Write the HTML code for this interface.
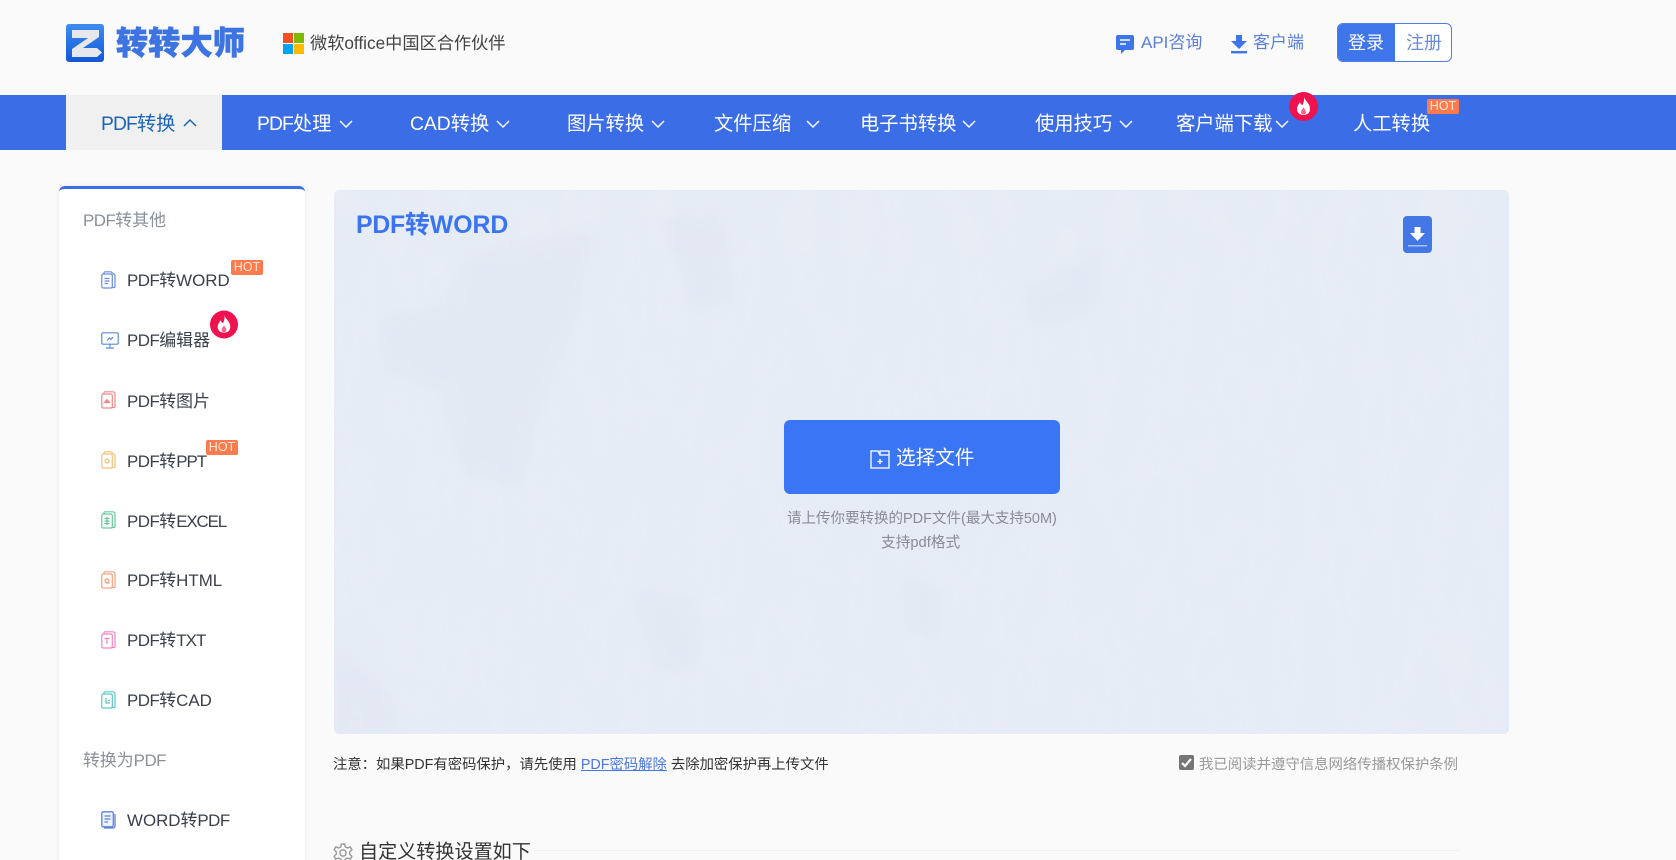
<!DOCTYPE html>
<html lang="zh-CN">
<head>
<meta charset="utf-8">
<title>PDF转WORD</title>
<style>
html,body{margin:0;padding:0;width:1676px;height:860px;overflow:hidden;background:#fafafa}
body{position:relative;font-family:"Liberation Sans","Noto Sans CJK SC",sans-serif;color:#333}
.a{position:absolute}
.t{position:absolute;white-space:nowrap;line-height:30px;height:30px}
.n{color:#fff;font-size:19.3px}
.s{font-size:16.9px;color:#3a3f4a;left:127px}
.g{font-size:16.9px;color:#8b909a;left:83px}
.p{letter-spacing:-.5px}
.q{letter-spacing:-.9px}
.hot{position:absolute;background:#ff7a4d;color:#ffe9dc;font-size:12.5px;line-height:15px;height:15px;width:32px;text-align:center;border-radius:2px}
svg{position:absolute;display:block}
</style>
</head>
<body>
<!-- logo -->
<svg style="left:66px;top:24px" width="38" height="38" viewBox="0 0 38 38">
<defs><linearGradient id="lg" x1="0" y1="0" x2="0" y2="1"><stop offset="0" stop-color="#3f8df0"/><stop offset="1" stop-color="#1257d8"/></linearGradient></defs>
<rect width="38" height="38" rx="3" fill="url(#lg)"/>
<path d="M6 6H33V13L17 24H31L36 28.500 31 33H6V25L22 14H6Z" fill="#e6e8eb"/>
</svg>
<div class="t" style="left:116px;top:28px;font-size:32px;line-height:30px;font-weight:900;color:#3d74e2;-webkit-text-stroke:.6px #3d74e2;letter-spacing:.3px">转转大师</div>
<svg style="left:283px;top:33px" width="21" height="21" viewBox="0 0 21 21">
<rect width="10" height="10" fill="#f25022"/><rect x="11" width="10" height="10" fill="#7fba00"/>
<rect y="11" width="10" height="10" fill="#00a4ef"/><rect x="11" y="11" width="10" height="10" fill="#ffb900"/>
</svg>
<div class="t" style="left:310px;top:28px;font-size:17.2px;color:#444">微软office中国区合作伙伴</div>

<!-- top right -->
<svg style="left:1116px;top:35px" width="18" height="19" viewBox="0 0 18 19">
<path d="M2 0H16A2 2 0 0 1 18 2V13A2 2 0 0 1 16 15H9L5 19V15H2A2 2 0 0 1 0 13V2A2 2 0 0 1 2 0Z" fill="#3f75ea"/>
<path d="M4 5H14M4 9H10" stroke="#fff" stroke-width="1.6" fill="none"/>
</svg>
<div class="t" style="left:1141px;top:28px;font-size:17px;color:#5a7fd8">API咨询</div>
<svg style="left:1230px;top:35px" width="18" height="19" viewBox="0 0 18 19">
<path d="M6 0H12V6H17L9 14 1 6H6Z" fill="#3f75ea"/><rect x="1" y="16" width="16" height="2.4" fill="#3f75ea"/>
</svg>
<div class="t" style="left:1253px;top:28px;font-size:17px;color:#5a7fd8">客户端</div>
<div class="a" style="left:1337px;top:23px;width:113px;height:37px;border:1px solid #4f7de0;border-radius:6px;background:#fff;overflow:hidden">
<div style="width:57px;height:37px;background:#3f75ea"></div>
</div>
<div class="t" style="left:1348px;top:28px;font-size:18px;color:#fff">登录</div>
<div class="t" style="left:1406px;top:28px;font-size:18px;color:#6a8cd8">注册</div>

<!-- nav -->
<div class="a" style="left:0;top:95px;width:1676px;height:55px;background:#3b6de6"></div>
<div class="a" style="left:66px;top:95px;width:156px;height:55px;background:#f0f0f0"></div>
<div class="t" style="left:101px;top:110px;font-size:19.3px;color:#1c64b8"><span class="q">PDF</span>转换</div>
<div class="t n" style="left:257px;top:110px"><span class="q">PDF</span>处理</div>
<div class="t n" style="left:410px;top:110px">CAD转换</div>
<div class="t n" style="left:567px;top:110px">图片转换</div>
<div class="t n" style="left:714px;top:110px">文件压缩</div>
<div class="t n" style="left:860px;top:110px">电子书转换</div>
<div class="t n" style="left:1035px;top:110px">使用技巧</div>
<div class="t n" style="left:1176px;top:110px">客户端下载</div>
<div class="t n" style="left:1353px;top:110px">人工转换</div>
<svg style="left:0;top:95px" width="1676" height="55" viewBox="0 95 1676 55" fill="none" stroke="#fff" stroke-width="1.5">
<path d="M184 126L190 120 196 126" stroke="#1c64b8"/>
<path d="M340 121L346 127 352 121"/>
<path d="M497 121L503 127 509 121"/>
<path d="M652 121L658 127 664 121"/>
<path d="M807 121L813 127 819 121"/>
<path d="M963 121L969 127 975 121"/>
<path d="M1120 121L1126 127 1132 121"/>
<path d="M1276 121L1282 127 1288 121"/>
</svg>
<svg style="left:1289px;top:92px" width="29" height="29" viewBox="0 0 29 29">
<circle cx="14.5" cy="14.5" r="14.5" fill="#f0114f"/>
<path d="M15 5C16 9 21 11 21 17 21 21 18 23 14.5 23 11 23 8 21 8 17 8 14 10 12 11 10 11.500 12 12.500 13 13.500 13 14.500 11 15.500 8 15 5Z" fill="#fff"/>
<path d="M14.500 15C15 17 17 18 17 20 17 21.500 16 22.500 14.500 22.500 13 22.500 12 21.500 12 20 12 18 14 17 14.500 15Z" fill="#f7668f"/>
</svg>
<div class="hot" style="left:1427px;top:99px">HOT</div>

<!-- sidebar -->
<div class="a" style="left:59px;top:186px;width:246px;height:690px;background:#fff;border-top:3px solid #3b6de6;border-radius:6px 6px 0 0;box-shadow:0 0 6px rgba(0,0,0,.06);box-sizing:border-box"></div>
<div class="t g" style="top:206px"><span class="p">PDF</span>转其他</div>
<div class="t s" style="top:266px"><span class="p">PDF</span>转WORD</div>
<div class="t s" style="top:326px"><span class="p">PDF</span>编辑器</div>
<div class="t s" style="top:387px"><span class="p">PDF</span>转图片</div>
<div class="t s" style="top:447px"><span class="p">PDF</span>转<span style="letter-spacing:-1px">PPT</span></div>
<div class="t s" style="top:507px"><span class="p">PDF</span>转<span style="letter-spacing:-1.1px">EXCEL</span></div>
<div class="t s" style="top:566px"><span class="p">PDF</span>转HTML</div>
<div class="t s" style="top:626px"><span class="p">PDF</span>转<span class="q">TXT</span></div>
<div class="t s" style="top:686px"><span class="p">PDF</span>转CAD</div>
<div class="t g" style="top:746px">转换为<span class="p">PDF</span></div>
<div class="t s" style="top:806px">WORD转<span class="p">PDF</span></div>

<svg style="left:101px;top:271px" width="15" height="18" viewBox="0 0 15 18" fill="none" stroke="#6a8fd8" stroke-width="1.2"><path d="M3 3V1.500A1 1 0 0 1 4 .8H10L14 4V15.500A1 1 0 0 1 13 16.500H11"/><rect x=".8" y="3" width="10.500" height="14" rx="1.500"/><path d="M3.500 7.500H8.500M3.500 10H8.500M3.500 12.500H7"/></svg>
<svg style="left:101px;top:332px" width="18" height="17" viewBox="0 0 18 17" fill="none" stroke="#5b8ad6" stroke-width="1.2"><rect x=".8" y=".8" width="16.400" height="11.400" rx="1.200"/><path d="M9 12V15.500M5 16H13M6 8.500L8.500 6 10 7.500 12 5" /></svg>
<svg style="left:101px;top:391px" width="15" height="18" viewBox="0 0 15 18" fill="none" stroke="#ee8a8a" stroke-width="1.2"><path d="M3 3V1.500A1 1 0 0 1 4 .8H12A2 2 0 0 1 14 3V15.500A1 1 0 0 1 13 16.500H11"/><rect x=".8" y="3" width="10.500" height="14" rx="1.500"/><path d="M3.500 11.500L6 8.500 8.500 11.500Z" fill="#ee8a8a"/></svg>
<svg style="left:101px;top:451px" width="15" height="18" viewBox="0 0 15 18" fill="none" stroke="#f2c27c" stroke-width="1.2"><path d="M3 3V1.500A1 1 0 0 1 4 .8H10L14 4V15.500A1 1 0 0 1 13 16.500H11"/><rect x=".8" y="3" width="10.500" height="14" rx="1.500"/><circle cx="6" cy="10" r="2"/></svg>
<svg style="left:101px;top:511px" width="15" height="18" viewBox="0 0 15 18" fill="none" stroke="#6cc79b" stroke-width="1.2"><path d="M3 3V1.500A1 1 0 0 1 4 .8H12A2 2 0 0 1 14 3V15.500A1 1 0 0 1 13 16.500H11"/><rect x=".8" y="3" width="10.500" height="14" rx="1.500"/><path d="M3.500 7.500H8.500M3.500 10H8.500M3.500 12.500H8.500M6 6V14"/></svg>
<svg style="left:101px;top:571px" width="15" height="18" viewBox="0 0 15 18" fill="none" stroke="#f0a37e" stroke-width="1.2"><path d="M3 3V1.500A1 1 0 0 1 4 .8H12A2 2 0 0 1 14 3V15.500A1 1 0 0 1 13 16.500H11"/><rect x=".8" y="3" width="10.500" height="14" rx="1.500"/><path d="M4 9L6 7.500M5.500 11L8.500 12.500"/><circle cx="6" cy="10" r="2"/></svg>
<svg style="left:101px;top:631px" width="15" height="18" viewBox="0 0 15 18" fill="none" stroke="#f285c0" stroke-width="1.2"><path d="M3 3V1.500A1 1 0 0 1 4 .8H12A2 2 0 0 1 14 3V15.500A1 1 0 0 1 13 16.500H11"/><rect x=".8" y="3" width="10.500" height="14" rx="1.500"/><path d="M3.500 7.500H8.500M6 7.500V13"/></svg>
<svg style="left:101px;top:691px" width="15" height="18" viewBox="0 0 15 18" fill="none" stroke="#5cc9c0" stroke-width="1.2"><path d="M3 3V1.500A1 1 0 0 1 4 .8H12A2 2 0 0 1 14 3V15.500A1 1 0 0 1 13 16.500H11"/><rect x=".8" y="3" width="10.500" height="14" rx="1.500"/><path d="M5 7V12H9M7 9.500H9"/></svg>
<svg style="left:101px;top:811px" width="15" height="18" viewBox="0 0 15 18" fill="none" stroke="#5e82d8" stroke-width="1.3"><path d="M3 17H12A2 2 0 0 0 14 15V3"/><rect x=".8" y=".8" width="11.500" height="15" rx="1.500" fill="#eef2fc"/><path d="M3.500 5H9.500M3.500 8H9.500M3.500 11H7"/></svg>

<div class="hot" style="left:231px;top:260px">HOT</div>
<div class="hot" style="left:206px;top:440px">HOT</div>
<svg style="left:210px;top:310px" width="28" height="29" viewBox="0 0 29 29">
<circle cx="14.5" cy="14.5" r="14.500" fill="#f0114f"/>
<path d="M15 5C16 9 21 11 21 17 21 21 18 23 14.5 23 11 23 8 21 8 17 8 14 10 12 11 10 11.500 12 12.500 13 13.500 13 14.500 11 15.500 8 15 5Z" fill="#fff"/>
<path d="M14.500 15C15 17 17 18 17 20 17 21.500 16 22.500 14.500 22.500 13 22.500 12 21.500 12 20 12 18 14 17 14.500 15Z" fill="#f7668f"/>
</svg>

<!-- panel -->
<div class="a" style="left:334px;top:190px;width:1175px;height:544px;background:#e6ecf6;border-radius:5px;overflow:hidden">
<svg style="left:0;top:0" width="1175" height="544" viewBox="0 0 1175 544">
<defs>
<filter id="bl" x="-20%" y="-20%" width="140%" height="140%"><feGaussianBlur stdDeviation="7"/></filter>
<filter id="nz" x="0" y="0" width="100%" height="100%">
<feTurbulence type="fractalNoise" baseFrequency="0.035 0.012" numOctaves="5" seed="7"/>
<feColorMatrix values="0 0 0 0 0.80  0 0 0 0 0.85  0 0 0 0 0.92  4 0 0 0 -1.7"/>
</filter>
</defs>
<rect width="1175" height="544" filter="url(#nz)" opacity=".7"/>
<g fill="#d6deec" opacity=".2" filter="url(#bl)">
<path d="M130 70L260 40 245 120 200 240 185 300 125 280 110 200 50 180 45 130 115 110Z"/>
<path d="M330 30L385 25 400 110 360 120Z"/>
<path d="M690 100L770 60 760 120 700 140Z"/>
<path d="M300 400L360 410 365 480 320 480Z"/>
<path d="M570 390L610 400 600 450 570 440Z"/>
<path d="M0 460L60 510 70 544 0 544Z"/>
</g>
</svg>
</div>
<div class="t" style="left:356px;top:211px;font-size:24.800px;font-weight:700;color:#3b73f0"><span style="letter-spacing:-.2px">PDF</span>转WORD</div>
<div class="a" style="left:1403px;top:216px;width:29px;height:37px;border-radius:4px;background:#4477e6"></div>
<svg style="left:1403px;top:216px" width="29" height="37" viewBox="0 0 29 37">
<path d="M11.500 11H17.500V17H22L14.500 25 7 17H11.500Z" fill="#fff"/><rect x="5" y="29" width="19" height="1.500" fill="#a8c0f2"/>
</svg>

<div class="a" style="left:784px;top:420px;width:276px;height:74px;background:#3a75f6;border-radius:6px"></div>
<svg style="left:870px;top:450px" width="20" height="19" viewBox="0 0 20 19" fill="none" stroke="#e6efff" stroke-width="1.500">
<path d="M1 1H8L10 5H19V18H1ZM10 5V1H19V5"/><path d="M10 9V14M7.500 11.500H12.500" stroke-width="1.600"/>
</svg>
<div class="t" style="left:896px;top:443px;font-size:19.6px;color:#fff">选择文件</div>
<div class="t" style="left:787px;top:504px;font-size:14.500px;color:#878c96">请上传你要转换的PDF文件(最大支持50M)</div>
<div class="t" style="left:881px;top:528px;font-size:14.700px;color:#878c96">支持pdf格式</div>

<!-- notes -->
<div class="t" style="left:333px;top:750px;font-size:14.350px;color:#333">注意：如果PDF有密码保护，请先使用 <span style="color:#4a76e0;text-decoration:underline">PDF密码解除</span> 去除加密保护再上传文件</div>
<div class="a" style="left:1179px;top:755px;width:15px;height:15px;background:#757575;border-radius:2px"></div>
<svg style="left:1179px;top:755px" width="15" height="15" viewBox="0 0 15 15"><path d="M3 8L6 11 12 4" fill="none" stroke="#fff" stroke-width="2.200"/></svg>
<div class="t" style="left:1199px;top:750px;font-size:14.400px;color:#999">我已阅读并遵守信息网络传播权保护条例</div>

<!-- settings -->
<svg style="left:333px;top:843px" width="20" height="20" viewBox="0 0 18 18" fill="none" stroke="#9a9a9a" stroke-width="1.300">
<path d="M7.500 1H10.500L11 3.500 13 4.500 15.500 3.500 17 6 15 8V10L17 12 15.500 14.500 13 13.500 11 14.500 10.500 17H7.500L7 14.500 5 13.500 2.500 14.500 1 12 3 10V8L1 6 2.500 3.500 5 4.500 7 3.500Z"/><circle cx="9" cy="9" r="2.800"/>
</svg>
<div class="t" style="left:359px;top:838px;font-size:19.100px;color:#333">自定义转换设置如下</div>
<div class="a" style="left:535px;top:850px;width:924px;height:1px;background:#f0f0f0"></div>
</body>
</html>
